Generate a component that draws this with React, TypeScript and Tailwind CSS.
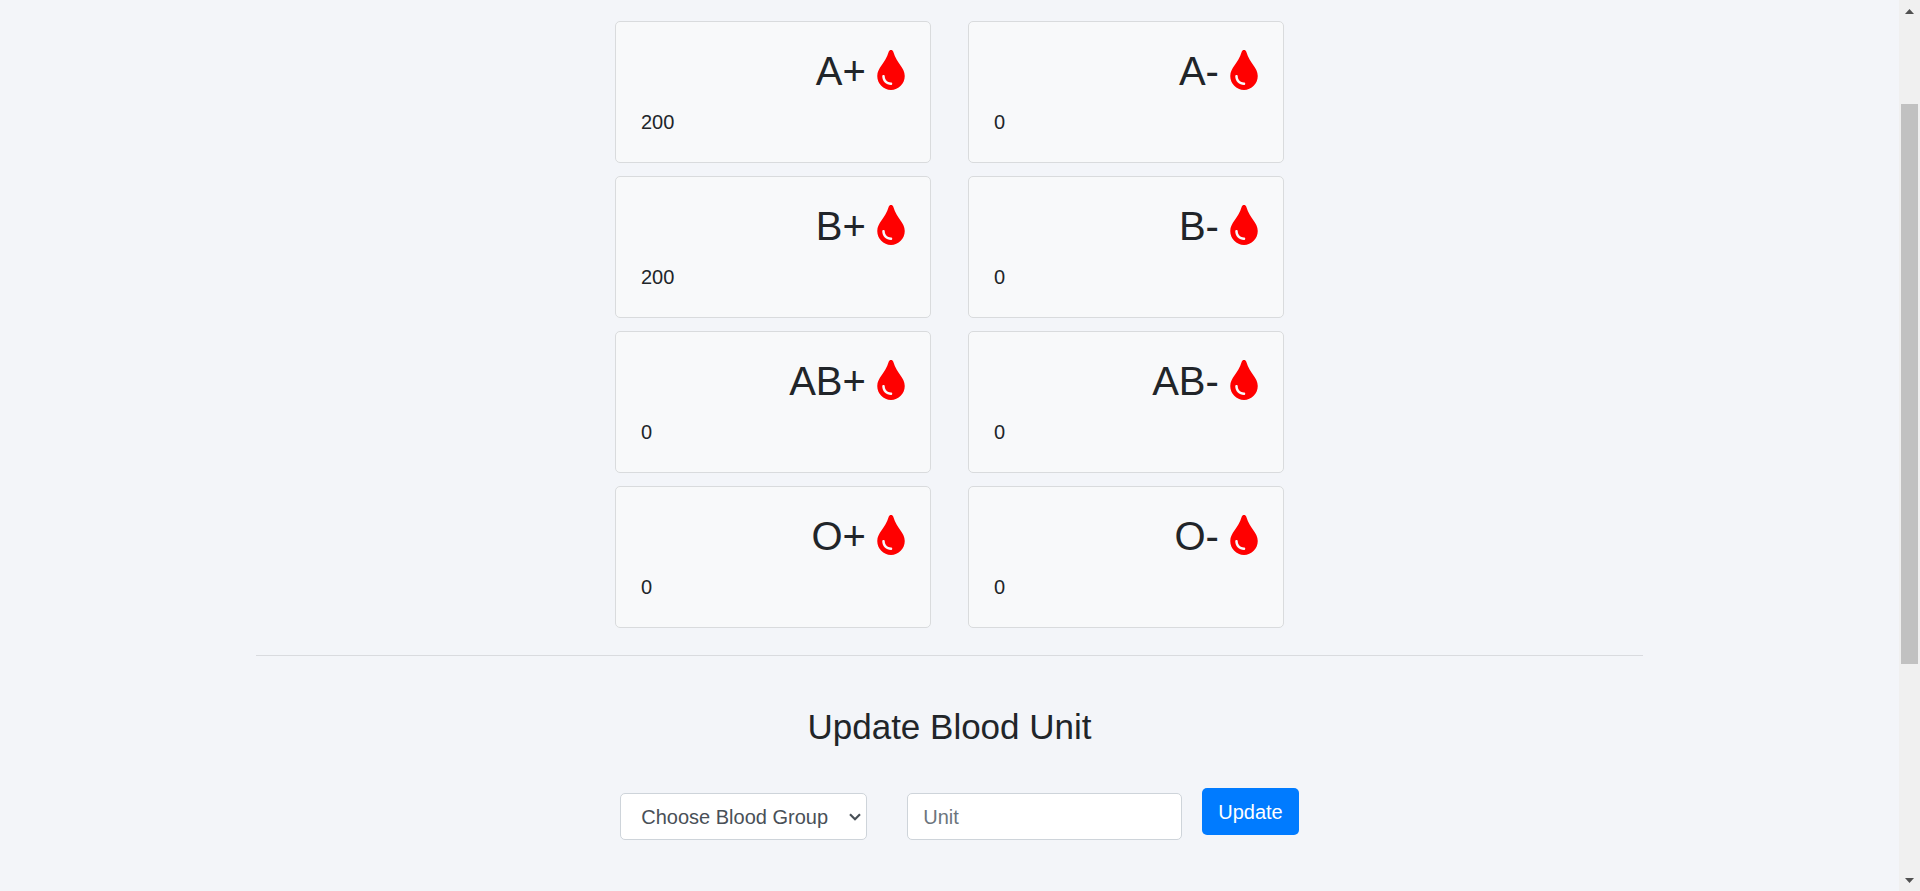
import { FaTint } from "react-icons/fa";

const stock = [
  { group: "A+", units: 200 },
  { group: "A-", units: 0 },
  { group: "B+", units: 200 },
  { group: "B-", units: 0 },
  { group: "AB+", units: 0 },
  { group: "AB-", units: 0 },
  { group: "O+", units: 0 },
  { group: "O-", units: 0 },
];

function StockCard({ group, units }: { group: string; units: number }) {
  return (
    <article className="rounded-[5px] border border-[#d9dbdd] bg-[#f8f9fa] p-[25px]">
      <h2 className="text-right text-[40px] leading-[48px]">
        {group} <FaTint className="inline h-10 w-7 align-[-5px] text-[#ff0000]" aria-hidden="true" />
      </h2>
      <p className="mt-3 text-xl leading-[30px]">{units}</p>
    </article>
  );
}

function Scrollbar() {
  return (
    <div className="flex w-[21px] shrink-0 flex-col items-center bg-[#f0f0f0] pt-[9px] pb-2" aria-hidden="true">
      <svg className="h-[5px] w-[9px]" viewBox="0 0 9 5" fill="#505050">
        <path d="M4.5 0 9 5H0z" />
      </svg>
      <div className="flex w-full grow flex-col items-center pt-[90px]">
        <div className="h-[72.4%] w-[17px] bg-[#c1c1c1]" />
      </div>
      <svg className="h-[5px] w-[9px]" viewBox="0 0 9 5" fill="#505050">
        <path d="M0 0h9L4.5 5z" />
      </svg>
    </div>
  );
}

export default function App() {
  return (
    <div className="flex min-h-screen bg-[#f3f5f9] font-['Liberation_Sans',Arial,sans-serif] text-[#212529]">
      <main className="grow pt-[21px]">
        <section className="mx-auto grid max-w-[669px] grid-cols-2 gap-x-[37px] gap-y-[13px]">
          {stock.map((item) => (
            <StockCard key={item.group} group={item.group} units={item.units} />
          ))}
        </section>
        <hr className="mx-auto mt-[27px] w-[73%] border-[#d9dbdf]" />
        <h1 className="mt-[50px] text-center text-[35px] leading-[42px]">Update Blood Unit</h1>
        <form className="mt-10 flex items-start justify-center pl-5 text-xl" onSubmit={(e) => e.preventDefault()}>
          <div className="relative mt-[5px] mr-10">
            <select
              aria-label="Blood group"
              defaultValue=""
              className="h-[47px] w-[247px] appearance-none rounded-[5px] border border-[#ced4da] bg-white pl-5 text-[#495057]"
            >
              <option value="">Choose Blood Group</option>
              {stock.map((item) => (
                <option key={item.group}>{item.group}</option>
              ))}
            </select>
            <svg
              className="pointer-events-none absolute top-5 right-[6px] h-[8px] w-3"
              viewBox="0 0 12 8"
              fill="none"
              stroke="#495057"
              strokeWidth="2.2"
              aria-hidden="true"
            >
              <path d="M1 1.2 6 6.2l5-5" />
            </svg>
          </div>
          <input
            type="number"
            aria-label="Unit"
            placeholder="Unit"
            className="mt-[5px] mr-5 h-[47px] w-[275px] rounded-[5px] border border-[#ced4da] bg-white px-[15px] pt-px text-[#495057] placeholder:text-[#6c757d]"
          />
          <button type="submit" className="h-[47px] rounded-[5px] bg-[#007bff] px-4 text-white">
            Update
          </button>
        </form>
      </main>
      <Scrollbar />
    </div>
  );
}
